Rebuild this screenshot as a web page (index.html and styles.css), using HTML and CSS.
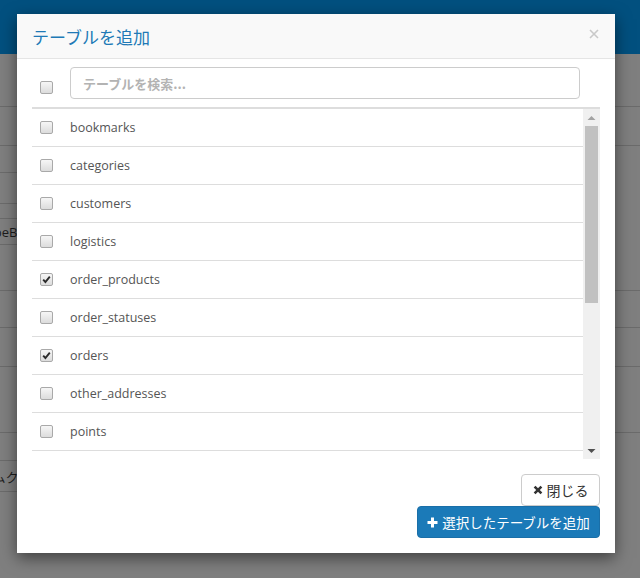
FILE: index.html
```html
<!DOCTYPE html>
<html lang="ja">
<head>
<meta charset="utf-8">
<title>テーブルを追加</title>
<link rel="stylesheet" href="styles.css">
</head>
<body>
<div class="page">
  <div class="navbar"></div>
  <div class="bg">
    <div class="bg-col">
      <div class="cell c54"></div>
      <div class="cell c39"></div>
      <div class="cell c27"></div>
      <div class="cell c31"></div>
      <div class="cell c15"></div>
      <div class="cell c26"><span class="bg-text">TypeBig</span></div>
      <div class="cell c46"></div>
      <div class="cell c37"></div>
      <div class="cell c39"></div>
      <div class="cell c66"></div>
      <div class="cell c28"></div>
      <div class="cell c31"><span class="bg-text jp">システムクラス</span></div>
    </div>
    <div class="bg-col">
      <div class="cell c54"></div>
      <div class="cell c39"></div>
      <div class="cell c145"></div>
      <div class="cell c37"></div>
      <div class="cell c39"></div>
      <div class="cell c66"></div>
    </div>
  </div>
</div>

<div class="modal">
  <div class="modal-header">
    <h4 class="modal-title">テーブルを追加</h4>
    <span class="close">
      <svg width="10" height="10" viewBox="0 0 10 10"><path d="M1 1 L9 9 M9 1 L1 9" stroke="#c9c9c9" stroke-width="1.6" fill="none"/></svg>
    </span>
  </div>
  <div class="modal-body">
    <div class="search-row">
      <div class="cb-col head-cb"><span class="cb"></span></div>
      <input class="search" type="text" placeholder="テーブルを検索...">
    </div>
    <div class="list">
      <div class="rows">
        <div class="row"><span class="cb"></span><span class="name">bookmarks</span></div>
        <div class="row"><span class="cb"></span><span class="name">categories</span></div>
        <div class="row"><span class="cb"></span><span class="name">customers</span></div>
        <div class="row"><span class="cb"></span><span class="name">logistics</span></div>
        <div class="row"><span class="cb checked"><svg width="11" height="11" viewBox="0 0 11 11"><path d="M2.2 5.6 L4.4 8 L8.8 2.6" stroke="#2b2b2b" stroke-width="1.9" fill="none"/></svg></span><span class="name">order_products</span></div>
        <div class="row"><span class="cb"></span><span class="name">order_statuses</span></div>
        <div class="row"><span class="cb checked"><svg width="11" height="11" viewBox="0 0 11 11"><path d="M2.2 5.6 L4.4 8 L8.8 2.6" stroke="#2b2b2b" stroke-width="1.9" fill="none"/></svg></span><span class="name">orders</span></div>
        <div class="row"><span class="cb"></span><span class="name">other_addresses</span></div>
        <div class="row"><span class="cb"></span><span class="name">points</span></div>
        <div class="row row-empty"></div>
      </div>
      <div class="scrollbar">
        <div class="sb-btn"><svg width="9" height="6" viewBox="0 0 9 6"><path d="M0.5 5 L4.5 1 L8.5 5 Z" fill="#a3a3a3"/></svg></div>
        <div class="sb-thumb"></div>
        <div class="sb-space"></div>
        <div class="sb-btn"><svg width="9" height="6" viewBox="0 0 9 6"><path d="M0.5 1 L4.5 5 L8.5 1 Z" fill="#505050"/></svg></div>
      </div>
    </div>
  </div>
  <div class="modal-footer">
    <button class="btn btn-default" type="button"><svg class="ico" width="10" height="10" viewBox="0 0 10 10"><path d="M1.6 1.6 L8.4 8.4 M8.4 1.6 L1.6 8.4" stroke="#333" stroke-width="2.6" fill="none"/></svg>閉じる</button>
    <button class="btn btn-primary" type="button"><svg class="ico" width="11" height="11" viewBox="0 0 11 11"><path d="M5.5 0.5 V10.5 M0.5 5.5 H10.5" stroke="#fff" stroke-width="3" fill="none"/></svg>選択したテーブルを追加</button>
  </div>
</div>
</body>
</html>
```
FILE: styles.css
```css
html, body {
  margin: 0;
  padding: 0;
}
body {
  width: 640px;
  height: 578px;
  overflow: hidden;
  background: #7f7f7f;
  font-family: "Open Sans", "Noto Sans CJK JP", sans-serif;
  font-size: 12.5px;
  color: #555;
  position: relative;
}
.page {
  width: 640px;
  height: 578px;
}
.navbar {
  height: 54px;
  background: #02507f;
}
.bg {
  display: flex;
  justify-content: space-between;
}
.bg-col {
  width: 40px;
  display: flex;
  flex-direction: column;
}
.cell {
  box-sizing: border-box;
  border-bottom: 1px solid #6b6b6b;
  display: flex;
  align-items: center;
  overflow: hidden;
  white-space: nowrap;
}
.c15 { height: 15px; }
.c26 { height: 26px; }
.c27 { height: 27px; }
.c28 { height: 28px; }
.c31 { height: 31px; }
.c37 { height: 37px; }
.c39 { height: 39px; }
.c46 { height: 46px; }
.c54 { height: 53px; }
.c66 { height: 66px; }
.c145 { height: 145px; }
.bg-text {
  color: #1c1c1c;
  font-size: 13px;
  margin-left: -20px;
}
.bg-text.jp {
  margin-left: -46px;
  font-family: "Noto Sans CJK JP", sans-serif;
}

/* modal */
.modal {
  position: absolute;
  left: 17px;
  top: 14px;
  width: 598px;
  height: 539px;
  background: #fff;
  box-shadow: 0 5px 15px rgba(0, 0, 0, 0.5);
  display: flex;
  flex-direction: column;
}
.modal-header {
  height: 45px;
  flex: none;
  box-sizing: border-box;
  background: #f9f9f9;
  border-bottom: 1px solid #e5e5e5;
  padding: 0 16px 0 15px;
  display: flex;
  align-items: center;
  justify-content: space-between;
}
.modal-title {
  margin: 0;
  font-family: "Noto Sans CJK JP", sans-serif;
  font-weight: normal;
  font-size: 17px;
  color: #2079b6;
}
.close {
  display: flex;
  margin-top: -4px;
}
.modal-body {
  padding: 0 15px;
}
.search-row {
  height: 48px;
  box-sizing: border-box;
  padding: 8px 20px 8px 0;
  display: flex;
  align-items: flex-end;
}
.cb-col {
  width: 38px;
  flex: none;
}
.head-cb {
  padding-left: 8px;
  box-sizing: border-box;
  display: flex;
  padding-bottom: 5px;
}
.search {
  flex: 1;
  height: 32px;
  box-sizing: border-box;
  border: 1px solid #ccc;
  border-radius: 4px;
  padding: 0 12px;
  font-family: "Noto Sans CJK JP", sans-serif;
  font-size: 13px;
  outline: none;
  margin: 0;
}
.search::placeholder {
  color: #b3b3b3;
  font-weight: bold;
}
.list {
  border-top: 2px solid #dddddd;
  height: 350px;
  display: flex;
}
.rows {
  flex: 1;
  overflow: hidden;
}
.row {
  height: 38px;
  box-sizing: border-box;
  border-bottom: 1px solid #dddddd;
  display: flex;
  align-items: center;
  padding-left: 8px;
}
.name {
  margin-left: 17px;
  color: #555;
}
.cb {
  width: 13px;
  height: 13px;
  box-sizing: border-box;
  border: 1px solid #a9a9a9;
  border-radius: 2px;
  background: linear-gradient(#f6f6f6, #dcdcdc);
  display: inline-flex;
  align-items: center;
  justify-content: center;
  flex: none;
}
.scrollbar {
  width: 17px;
  flex: none;
  background: #f0f0f0;
  display: flex;
  flex-direction: column;
}
.sb-btn {
  height: 17px;
  display: flex;
  align-items: center;
  justify-content: center;
}
.sb-thumb {
  height: 177px;
  margin: 0 2px;
  background: #c1c1c1;
}
.sb-space {
  flex: 1;
}
.modal-footer {
  padding: 15px 15px 15px;
  display: flex;
  flex-direction: column;
  align-items: flex-end;
}
.btn {
  height: 32px;
  box-sizing: border-box;
  border-radius: 4px;
  font-family: "Noto Sans CJK JP", sans-serif;
  font-size: 14px;
  padding: 0;
  display: inline-flex;
  align-items: center;
  justify-content: center;
  white-space: nowrap;
  margin: 0;
  cursor: pointer;
}
.ico {
  margin-right: 4px;
  flex: none;
}
.btn-default {
  background: #fff;
  border: 1px solid #cccccc;
  color: #333;
  width: 79px;
}
.btn-primary {
  background: #1b7ab8;
  border: 1px solid #1a6fa8;
  color: #fff;
  width: 183px;
  font-size: 13.5px;
}
```
